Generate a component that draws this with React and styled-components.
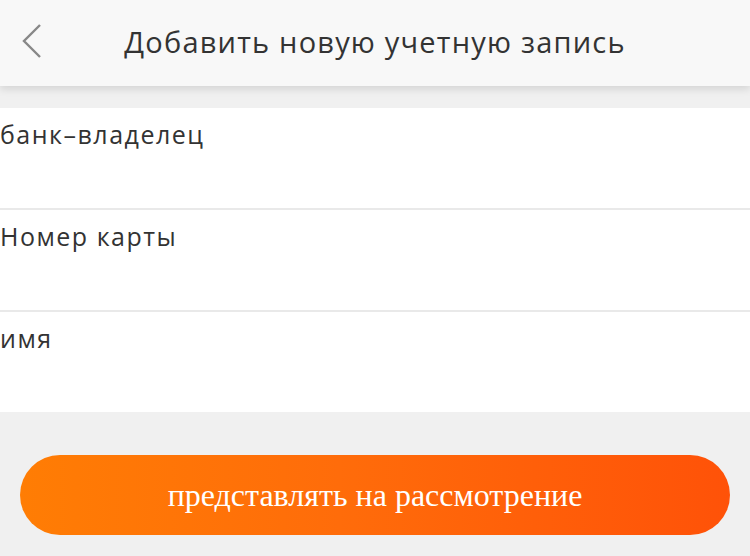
import React from 'react'
import styled, { createGlobalStyle } from 'styled-components'

const GlobalStyle = createGlobalStyle`
  html, body {
    margin: 0;
    padding: 0;
    background-color: #f0f0f0;
  }
  * {
    box-sizing: border-box;
  }
`

const Page = styled.div`
  width: 750px;
  height: 556px;
  background-color: #f0f0f0;
  font-family: "Open Sans", "Liberation Sans", sans-serif;
  overflow: hidden;
`

const Header = styled.div`
  position: relative;
  height: 86px;
  padding-bottom: 4px;
  background-color: #f8f8f8;
  display: flex;
  align-items: center;
  justify-content: center;
  box-shadow: 0 3px 8px rgba(0, 0, 0, 0.12);
`

const BackButton = styled.div`
  position: absolute;
  left: 18px;
  top: 22px;
  width: 28px;
  height: 38px;
`

const Title = styled.h1`
  margin: 0;
  font-size: 29px;
  font-weight: 400;
  color: #333;
  letter-spacing: 1.2px;
`

const Form = styled.div`
  margin-top: 22px;
  display: flex;
  flex-direction: column;
  gap: 2px;
  background-color: #e9e9e9;
`

const Field = styled.div`
  height: 100px;
  background-color: #fff;
  padding-top: 10px;
`

const Label = styled.div`
  font-size: 25px;
  color: #333;
  line-height: 32px;
  letter-spacing: 1.5px;
`

const Footer = styled.div`
  padding: 43px 20px 0;
`

const SubmitButton = styled.button`
  width: 100%;
  height: 80px;
  border: none;
  border-radius: 40px;
  background: linear-gradient(90deg, #ff7d04 0%, #ff6c0a 45%, #ff5208 100%);
  color: #fff;
  font-family: "Liberation Serif", "DejaVu Serif", serif;
  font-size: 32px;
  cursor: pointer;
`

const fields = ['банк–владелец', 'Номер карты', 'имя']

export default function App() {
  return (
    <Page>
      <GlobalStyle />
      <Header>
        <BackButton>
          <svg width="28" height="38" viewBox="0 0 28 38">
            <path d="M22 3 L6 19 L22 35" fill="none" stroke="#888" strokeWidth="2.4" />
          </svg>
        </BackButton>
        <Title>Добавить новую учетную запись</Title>
      </Header>
      <Form>
        {fields.map((f) => (
          <Field key={f}>
            <Label>{f}</Label>
          </Field>
        ))}
      </Form>
      <Footer>
        <SubmitButton>представлять на рассмотрение</SubmitButton>
      </Footer>
    </Page>
  )
}
